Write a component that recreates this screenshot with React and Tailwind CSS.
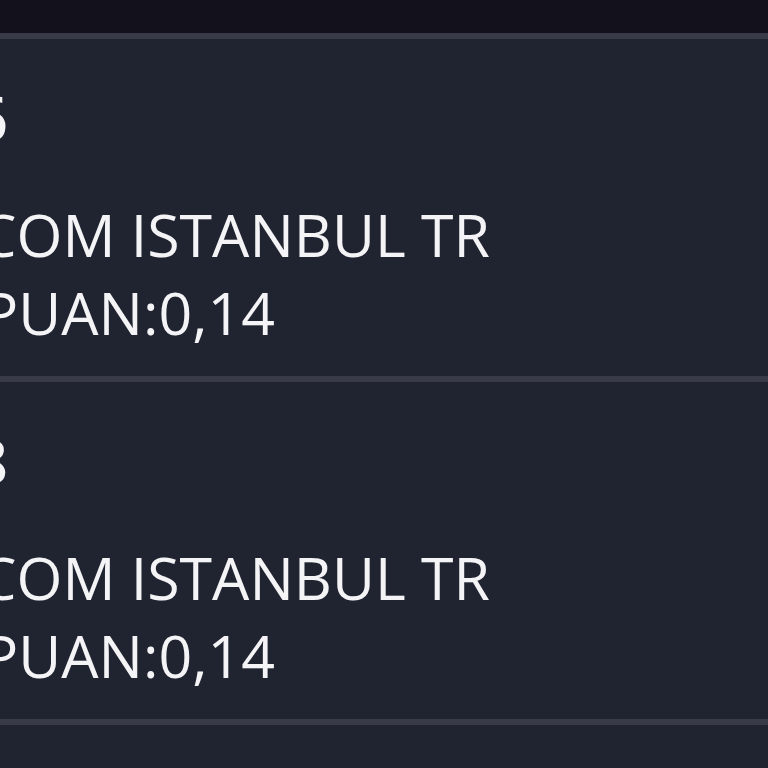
export default function App() {
    const items = [
        { id: 1, amount: '27,66', merchant: 'TRENDYOL.COM ISTANBUL TR', points: 'MAXIPUAN:0,14' },
        { id: 2, amount: '27,68', merchant: 'TRENDYOL.COM ISTANBUL TR', points: 'MAXIPUAN:0,14' },
        { id: 3, amount: '27,68', merchant: 'TRENDYOL.COM ISTANBUL TR', points: 'MAXIPUAN:0,14' },
    ];

    return (
        <div className="h-[768px] w-[768px] overflow-hidden bg-[#202330] font-['Open_Sans',sans-serif] text-[#f4f4f6]">
            <div className="h-[33px] bg-[#12111c]"></div>
            {items.map((it) => (
                <div key={it.id}>
                    <div className="h-[6px] bg-[#393b49]"></div>
                    <div className="h-[337px] overflow-hidden bg-[#202330] pt-[39px]">
                        <div className="flex w-[8px] justify-end whitespace-nowrap text-[62px] font-semibold leading-[78px]">
                            <span>{it.amount}</span>
                        </div>
                        <div className="mt-[39px] flex w-[490px] justify-end whitespace-nowrap text-[59px] leading-[78px]">
                            <span>{it.merchant}</span>
                        </div>
                        <div className="flex w-[275px] justify-end whitespace-nowrap text-[59px] leading-[78px]">
                            <span>{it.points}</span>
                        </div>
                    </div>
                </div>
            ))}
        </div>
    );
}
